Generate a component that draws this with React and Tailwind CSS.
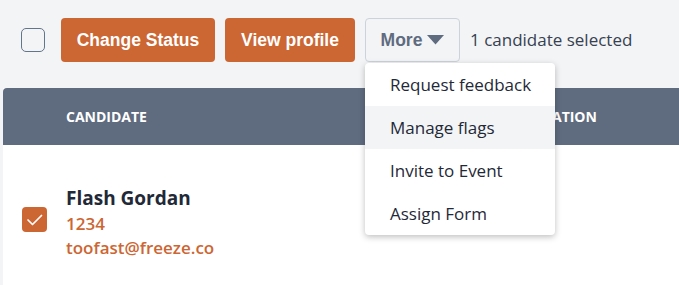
import React from "react";

export default function App() {
  const sans = { fontFamily: '"Open Sans", "Noto Sans", sans-serif' };
  const arial = { fontFamily: '"Liberation Sans", Arial, sans-serif' };
  return (
    <div className="w-[679px] h-[285px] bg-[#f3f4f6] overflow-hidden relative" style={sans}>
      <div className="flex items-center h-[80px] mb-[8px] pl-[21px]">
        <div className="w-[24px] h-[24px] rounded-[5px] border-[1.5px] border-[#64748b] bg-[#f3f4f6]" />
        <button className="ml-[16px] h-[44px] w-[154px] rounded-[4px] bg-[#cc6633] text-white text-[17.5px] font-bold" style={arial}>
          Change Status
        </button>
        <button className="ml-[10px] h-[44px] w-[130px] rounded-[4px] bg-[#cc6633] text-white text-[17.5px] font-bold" style={arial}>
          View profile
        </button>
        <button className="ml-[10px] h-[44px] w-[95px] rounded-[4px] border border-[#cdd3db] bg-[#f3f4f6] text-[#5f6b7f] text-[17.5px] font-bold flex items-center justify-center gap-[5px]" style={arial}>
          More
          <svg width="17" height="10" viewBox="0 0 17 10"><path d="M0 0 H17 L8.5 9.5 Z" fill="#5f6b7f" /></svg>
        </button>
        <span className="ml-[10px] text-[17px] text-[#374151]">1 candidate selected</span>
      </div>
      <div className="ml-[3px] bg-white h-[197px]">
        <div className="h-[57px] bg-[#5f6b7f] rounded-tl-[4px] flex items-center pl-[63px] text-white text-[14px] font-bold">
          <span className="w-[458px]">CANDIDATE</span>
          <span>LOCATION</span>
        </div>
        <div className="flex items-start pl-[19px] pt-[39px]">
          <div className="w-[25px] h-[25px] rounded-[4px] bg-[#cc6633] mt-[23px]">
            <svg width="25" height="25" viewBox="0 0 25 25"><path d="M6 13 L10.5 17.5 L19.5 8.5" stroke="white" strokeWidth="1.7" fill="none" strokeLinecap="round" strokeLinejoin="round" /></svg>
          </div>
          <div className="ml-[19px] flex flex-col">
            <span className="text-[19px] font-bold text-[#1f2937] leading-[28px]">Flash Gordan</span>
            <span className="text-[17px] font-semibold text-[#cc6633] leading-[24px]">1234</span>
            <span className="text-[17px] font-semibold text-[#cc6633] leading-[24px]">toofast@freeze.co</span>
          </div>
        </div>
      </div>
      <div className="absolute left-[365px] top-[63px] w-[190px] bg-white rounded-[4px] shadow-[0_2px_6px_rgba(0,0,0,0.25)] overflow-hidden">
        {["Request feedback", "Manage flags", "Invite to Event", "Assign Form"].map((t, i) => (
          <div key={t} className={"h-[43px] flex items-center pl-[25px] text-[17px] text-[#1f2937] " + (i === 1 ? "bg-[#f3f4f6]" : "")}>
            {t}
          </div>
        ))}
      </div>
    </div>
  );
}
